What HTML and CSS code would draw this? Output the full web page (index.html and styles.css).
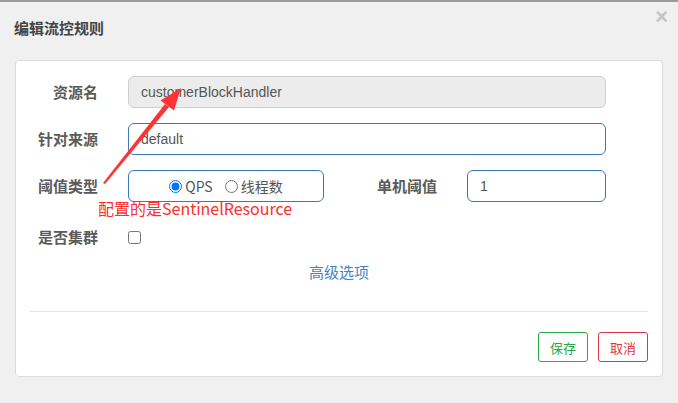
FILE: index.html
```html
<!DOCTYPE html>
<html lang="zh">
<head>
<meta charset="utf-8">
<link rel="stylesheet" href="styles.css">
</head>
<body>
<div class="dialog">
  <div class="header">
    <h4 class="title">编辑流控规则</h4>
    <span class="close">×</span>
  </div>
  <div class="panel">
    <div class="form">
      <div class="row">
        <label class="lbl">资源名</label>
        <div class="input disabled wide">customerBlockHandler</div>
      </div>
      <div class="row">
        <label class="lbl">针对来源</label>
        <div class="input wide">default</div>
      </div>
      <div class="row">
        <label class="lbl">阈值类型</label>
        <div class="input radios">
          <label class="opt"><input type="radio" name="grade" checked>QPS</label>
          <label class="opt"><input type="radio" name="grade">线程数</label>
        </div>
        <label class="lbl lbl2">单机阈值</label>
        <div class="input count">1</div>
      </div>
      <div class="row row-check">
        <label class="lbl">是否集群</label>
        <input type="checkbox" class="check">
      </div>
    </div>
    <div class="adv"><a class="link">高级选项</a></div>
    <hr class="sep">
    <div class="footer">
      <button class="btn save">保存</button>
      <button class="btn cancel">取消</button>
    </div>
  </div>
  <svg class="arrow" width="678" height="403" viewBox="0 0 678 403">
    <polygon points="103,183 105,184 169,107 165,104" fill="#ff3333"/>
    <polygon points="181,88 160.5,100.5 174,110.5" fill="#ff3333"/>
  </svg>
  <span class="note">配置的是SentinelResource</span>
</div>
</body>
</html>
```

FILE: styles.css
```css
* { box-sizing: border-box; }
html, body { margin: 0; padding: 0; }
body {
  width: 678px;
  height: 403px;
  overflow: hidden;
  background: #f0f0f0;
  font-family: "Liberation Sans", "Noto Sans CJK SC", sans-serif;
  font-size: 14px;
  color: #555;
}
.dialog {
  position: relative;
  height: 403px;
  border-top: 2px solid #9c9c9c;
  background: #f0f0f0;
}
.header {
  display: flex;
  align-items: center;
  justify-content: space-between;
  height: 52px;
  padding: 0 10px 0 14px;
}
.title {
  margin: 0;
  font-family: "Noto Sans CJK SC", sans-serif;
  font-size: 15px;
  font-weight: bold;
  color: #444;
  line-height: 20px;
}
.close {
  align-self: flex-start;
  margin-top: 3px;
  font-family: "Liberation Sans", sans-serif;
  font-size: 22px;
  font-weight: bold;
  line-height: 24px;
  color: #c4c4c4;
}
.panel {
  margin: 6px 15px 0;
  background: #fff;
  border: 1px solid #dcdcdc;
  border-radius: 4px;
  padding: 15px 14px 14px;
}
.form { display: flex; flex-direction: column; gap: 15px; }
.row {
  display: flex;
  align-items: center;
  height: 32px;
}
.lbl {
  width: 68px;
  margin-right: 30px;
  text-align: right;
  font-family: "Noto Sans CJK SC", sans-serif;
  font-size: 15px;
  font-weight: bold;
  color: #5a5a5a;
  line-height: 20px;
}
.lbl2 { width: 113px; }
.input {
  height: 32px;
  border: 1px solid #3a79b8;
  border-radius: 6px;
  padding: 0 12px;
  display: flex;
  align-items: center;
  font-size: 14px;
  color: #555;
  background: #fff;
}
.wide { width: 478px; }
.disabled { background: #ececec; border-color: #cfcfcf; }
.radios { width: 196px; justify-content: center; gap: 12px; padding: 0; }
.count { width: 139px; }
.opt {
  display: flex;
  align-items: center;
  font-family: "Noto Sans CJK SC", sans-serif;
  font-size: 14px;
  color: #555;
}
.opt input { margin: 0 3px 0 0; width: 13px; height: 13px; }
.row-check { height: 40px; }
.check { margin: 0; width: 13px; height: 13px; }
.adv {
  margin-top: 5px;
  text-align: center;
  line-height: 20px;
}
.link {
  font-family: "Noto Sans CJK SC", sans-serif;
  font-size: 15px;
  color: #3d84c4;
}
.sep {
  margin: 28px 0 0;
  border: 0;
  border-top: 1px solid #e3e3e3;
  height: 0;
}
.footer {
  display: flex;
  justify-content: flex-end;
  gap: 10px;
  margin-top: 20px;
}
.btn {
  width: 50px;
  height: 30px;
  padding: 0;
  background: #fff;
  border: 1px solid;
  border-radius: 3px;
  font-family: "Noto Sans CJK SC", sans-serif;
  font-size: 13px;
}
.save { color: #28a745; border-color: #28a745; }
.cancel { color: #dc3545; border-color: #dc3545; }
.arrow { position: absolute; left: 0; top: -2px; }
.note {
  position: absolute;
  left: 98px;
  top: 196px;
  font-family: "Noto Sans CJK SC", sans-serif;
  font-size: 16px;
  line-height: 20px;
  color: #ff2d2d;
}
```
